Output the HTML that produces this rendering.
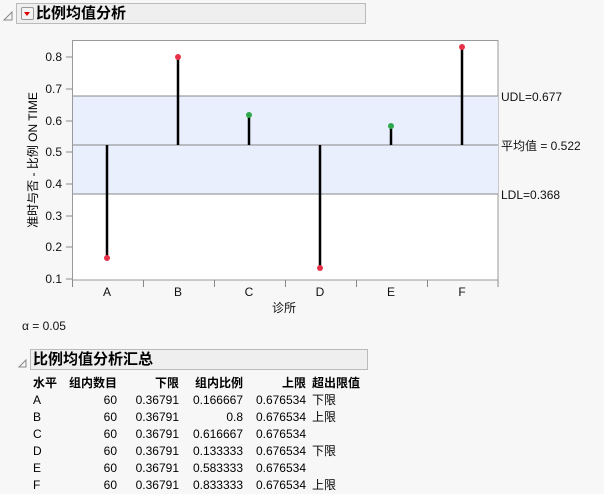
<!DOCTYPE html><html><head><meta charset="utf-8"><style>
body{margin:0;width:604px;height:493px;background:#f7f7f7;font-family:"Liberation Sans","Noto Sans CJK SC",sans-serif;overflow:hidden;position:relative}
.hdr{position:absolute;background:#efefef;border:1px solid #bbb;font-weight:bold;font-size:15px;line-height:19px}
table{position:absolute;left:33px;top:375px;border-collapse:collapse;font-size:12px}
td{padding:0;height:17px;line-height:17px}
.r{text-align:right}
</style></head><body>
<svg width="604" height="493" style="position:absolute;left:0;top:0" font-family="Liberation Sans, Noto Sans CJK SC, sans-serif" font-size="12">
<path d="M4 20 L12 12 L12 20 Z" fill="none" stroke="#888"/>
<rect x="72.5" y="40.5" width="425.5" height="239.5" fill="#fff" stroke="#999"/>
<rect x="73" y="96" width="425" height="98" fill="#e9effd"/>
<g stroke="#888"><line x1="73" y1="96" x2="498" y2="96"/><line x1="73" y1="145" x2="498" y2="145"/><line x1="73" y1="194" x2="498" y2="194"/></g>
<g stroke="#888">
<line x1="66" y1="57" x2="72" y2="57"/><line x1="66" y1="89" x2="72" y2="89"/><line x1="66" y1="121" x2="72" y2="121"/><line x1="66" y1="152" x2="72" y2="152"/><line x1="66" y1="184" x2="72" y2="184"/><line x1="66" y1="216" x2="72" y2="216"/><line x1="66" y1="247" x2="72" y2="247"/><line x1="66" y1="279" x2="72" y2="279"/>
<line x1="72.5" y1="280" x2="72.5" y2="287"/><line x1="143.5" y1="280" x2="143.5" y2="287"/><line x1="214.5" y1="280" x2="214.5" y2="287"/><line x1="285.5" y1="280" x2="285.5" y2="287"/><line x1="356.5" y1="280" x2="356.5" y2="287"/><line x1="427.5" y1="280" x2="427.5" y2="287"/><line x1="498" y1="280" x2="498" y2="287"/>
</g>
<g text-anchor="end" fill="#111"><text x="62" y="61">0.8</text><text x="62" y="93">0.7</text><text x="62" y="125">0.6</text><text x="62" y="156">0.5</text><text x="62" y="188">0.4</text><text x="62" y="220">0.3</text><text x="62" y="251">0.2</text><text x="62" y="283">0.1</text></g>
<g text-anchor="middle" fill="#111"><text x="107" y="296">A</text><text x="178" y="296">B</text><text x="249" y="296">C</text><text x="320" y="296">D</text><text x="391" y="296">E</text><text x="462" y="296">F</text><text x="284" y="312">诊所</text></g>
<text transform="translate(37,160) rotate(-90)" text-anchor="middle" font-size="12">准时与否 - 比例 ON TIME</text>
<g stroke="#000" stroke-width="2.5"><line x1="107" y1="145" x2="107" y2="258"/><line x1="178" y1="145" x2="178" y2="57"/><line x1="249" y1="145" x2="249" y2="115"/><line x1="320" y1="145" x2="320" y2="268"/><line x1="391" y1="145" x2="391" y2="126"/><line x1="462" y1="145" x2="462" y2="47"/></g>
<g fill="#e8324a"><circle cx="107" cy="258" r="3"/><circle cx="178" cy="57" r="3"/><circle cx="320" cy="268" r="3"/><circle cx="462" cy="47" r="3"/></g>
<g fill="#2ea84a"><circle cx="249" cy="115" r="3"/><circle cx="391" cy="126" r="3"/></g>
<g fill="#111"><text x="501" y="101">UDL=0.677</text><text x="501" y="150">平均值 = 0.522</text><text x="501" y="199">LDL=0.368</text><text x="22" y="330">α = 0.05</text></g>
<path d="M19 367 L26 360 L26 367 Z" fill="none" stroke="#888"/>
</svg>
<div class="hdr" style="left:16px;top:3px;width:348px;height:19px"><span style="position:absolute;left:4px;top:3px;width:11px;height:11px;border:1px solid #999;border-radius:2px;background:#f4f4f4"></span><span style="position:absolute;left:7px;top:8px;border-left:3px solid transparent;border-right:3px solid transparent;border-top:4px solid #d00"></span><span style="position:absolute;left:19px">比例均值分析</span></div>
<div class="hdr" style="left:30px;top:349px;width:336px;height:19px"><span style="position:absolute;left:2px">比例均值分析汇总</span></div>
<table>
<tr style="font-weight:bold"><td style="width:30px">水平</td><td class="r" style="width:54px">组内数目</td><td class="r" style="width:62px">下限</td><td class="r" style="width:64px">组内比例</td><td class="r" style="width:63px">上限</td><td style="padding-left:6px">超出限值</td></tr>
<tr><td>A</td><td class="r">60</td><td class="r">0.36791</td><td class="r">0.166667</td><td class="r">0.676534</td><td style="padding-left:6px">下限</td></tr>
<tr><td>B</td><td class="r">60</td><td class="r">0.36791</td><td class="r">0.8</td><td class="r">0.676534</td><td style="padding-left:6px">上限</td></tr>
<tr><td>C</td><td class="r">60</td><td class="r">0.36791</td><td class="r">0.616667</td><td class="r">0.676534</td><td></td></tr>
<tr><td>D</td><td class="r">60</td><td class="r">0.36791</td><td class="r">0.133333</td><td class="r">0.676534</td><td style="padding-left:6px">下限</td></tr>
<tr><td>E</td><td class="r">60</td><td class="r">0.36791</td><td class="r">0.583333</td><td class="r">0.676534</td><td></td></tr>
<tr><td>F</td><td class="r">60</td><td class="r">0.36791</td><td class="r">0.833333</td><td class="r">0.676534</td><td style="padding-left:6px">上限</td></tr>
</table>
</body></html>
